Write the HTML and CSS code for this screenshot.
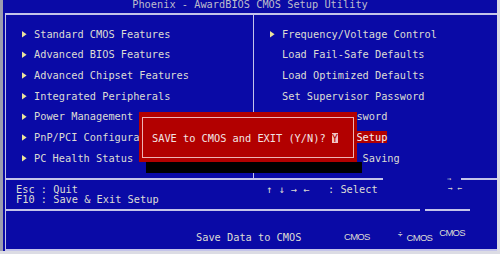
FILE: index.html
```html
<!DOCTYPE html>
<html lang="en">
<head>
  <meta charset="UTF-8">
  <title>CMOS Setup Utility</title>
  <link rel="stylesheet" href="styles.css">
</head>
<body>
  <div class="screen">
    <div class="title">Phoenix - AwardBIOS CMOS Setup Utility</div>
    <div class="frame">
      <div class="menus">
        <ul class="menu menu-left">
          <li class="item sub">Standard CMOS Features</li>
          <li class="item sub">Advanced BIOS Features</li>
          <li class="item sub">Advanced Chipset Features</li>
          <li class="item sub">Integrated Peripherals</li>
          <li class="item sub">Power Management Setup</li>
          <li class="item sub">PnP/PCI Configurations</li>
          <li class="item sub">PC Health Status</li>
        </ul>
        <ul class="menu menu-right">
          <li class="item sub">Frequency/Voltage Control</li>
          <li class="item">Load Fail-Safe Defaults</li>
          <li class="item">Load Optimized Defaults</li>
          <li class="item">Set Supervisor Password</li>
          <li class="item">Set User Password</li>
          <li class="item"><span class="selected">Save &amp; Exit Setup</span></li>
          <li class="item">Exit Without Saving</li>
        </ul>
      </div>

      <!-- help lines are broken in places, drawn as segments -->
      <div class="rule rule-top">
        <span class="seg seg-a"></span>
        <span class="gap gap-a"><span class="stray-arrow">→</span></span>
        <span class="seg seg-b"></span>
      </div>
      <div class="help">
        <div class="help-left">Esc : Quit<br>F10 : Save &amp; Exit Setup</div>
        <div class="help-right">
          <span>↑ ↓ → ←   : Select</span>
          <span class="stray">→ ←</span>
        </div>
      </div>
      <div class="rule rule-bottom">
        <span class="seg seg-c"></span>
        <span class="gap gap-c"></span>
        <span class="seg seg-d"></span>
      </div>

      <div class="status">
        <span class="status-main">Save Data to CMOS</span>
        <span class="tag tag-1">CMOS</span>
        <span class="mark">÷</span>
        <span class="tag tag-2">CMOS</span>
        <span class="tag tag-3">CMOS</span>
      </div>
    </div>

    <!-- confirm box over the menu -->
    <div class="dialog">
      <div class="dialog-box">SAVE to CMOS and EXIT (Y/N)? <span class="key">Y</span></div>
    </div>
  </div>
</body>
</html>
```

FILE: styles.css
```css
body {
  margin: 0;
  background: #dcdce4;
  font-family: "DejaVu Sans Mono", monospace;
  font-size: 10.3px;
  color: #dcdcd4;
}
.screen {
  position: relative;
  width: 494px;
  height: 251px;
  border-left: 3px solid #9c9cb0;
  background: #0a0aa6;
  overflow: hidden;
}
.title {
  height: 13px;
  line-height: 8px;
  text-align: center;
  color: #bcbccc;
  white-space: pre;
}
.frame {
  margin-left: 2px;
  border-top: 2px solid #c4c4ea;
  border-left: 1px solid #c4c4ea;
  border-bottom: 2px solid #c4c4ea;
}
.menus {
  display: grid;
  grid-template-columns: 248px 1fr;
  height: 163px;
}
.menu {
  margin: 0;
  padding: 8.7px 0 0 15.6px;
  list-style: none;
}
.menu-left {
  border-right: 1px solid #c4c4ea;
}
.item {
  line-height: 20.67px;
  height: 20.67px;
  white-space: pre;
  padding-left: 12.4px;
}
.item.sub {
  padding-left: 0;
}
.item.sub::before {
  content: '';
  display: inline-block;
  width: 5px;
  height: 7px;
  margin-right: 7.4px;
  background: #ece49c;
  clip-path: polygon(0 0, 100% 50%, 0 100%);
  vertical-align: 0;
}
.selected {
  background: #b20000;
  color: #f4f0f0;
}

/* broken rules */
.rule {
  display: flex;
  height: 2px;
}
.seg {
  background: #c4c4ea;
}
.gap {
  display: flex;
  align-items: center;
}
.seg-a { width: 377px; }
.gap-a { width: 78px; }
.seg-b { flex: 1; }
.seg-c { width: 414px; }
.gap-c { width: 5px; }
.seg-d { width: 45px; }
.stray-arrow {
  margin-left: 64px;
  font-size: 7px;
  line-height: 2px;
  color: #dcdcd4;
}

.help {
  display: grid;
  grid-template-columns: 249px 1fr;
  height: 29px;
  line-height: 10px;
  box-sizing: border-box;
  padding-top: 4px;
}
.help-left {
  padding-left: 10px;
  white-space: pre;
}
.help-right {
  display: flex;
  padding-left: 11px;
  white-space: pre;
}
.stray {
  margin-left: 70.4px;
  font-size: 8px;
}

.status {
  display: flex;
  align-items: center;
  height: 38px;
  box-sizing: border-box;
  padding: 13px 0 0 190px;
  line-height: 14px;
  align-self: start;
}
.status-main {
  white-space: pre;
}
.tag {
  font-family: "Liberation Sans", Arial, sans-serif;
  font-size: 9.5px;
  letter-spacing: -0.7px;
}
.tag-1 { margin-left: 42.6px; }
.mark {
  margin-left: 28px;
  font-size: 8px;
  margin-bottom: 4px;
}
.tag-2 { margin-left: 4px; margin-top: 2px; }
.tag-3 { margin-left: 7px; margin-bottom: 7px; }

.dialog {
  position: absolute;
  left: 136px;
  top: 112px;
  width: 218px;
  height: 50px;
  box-sizing: border-box;
  padding: 5px 3px 4px 3px;
  background: #b20000;
}
.dialog::after {
  content: '';
  position: absolute;
  left: 7px;
  top: 50px;
  width: 216px;
  height: 11px;
  background: #000;
}
.dialog-box {
  display: flex;
  align-items: center;
  height: 100%;
  box-sizing: border-box;
  border: 1px solid #eeb4b4;
  padding-left: 9px;
  color: #f2e4e4;
  white-space: pre;
}
.key {
  background: #f2c4c4;
  color: #b20000;
  line-height: 10px;
}
```
